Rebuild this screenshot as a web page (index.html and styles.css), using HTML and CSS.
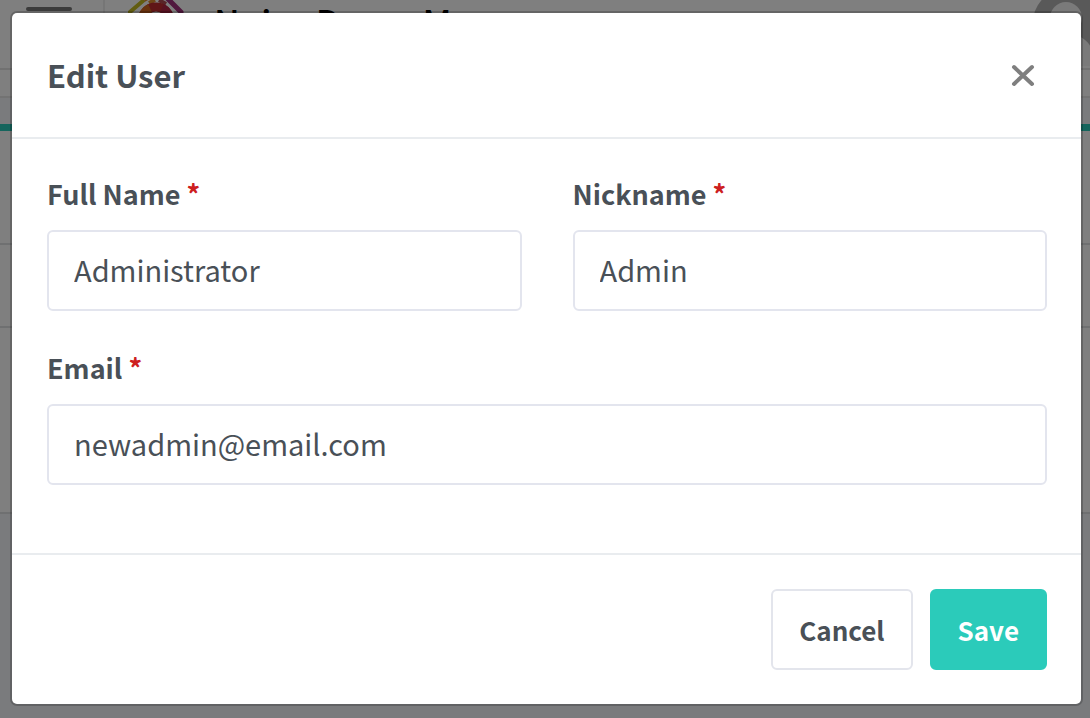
FILE: index.html
```html
<!DOCTYPE html>
<html lang="en">
<head>
<meta charset="utf-8">
<title>Edit User</title>
<link rel="stylesheet" href="styles.css">
</head>
<body>
<div class="page" aria-hidden="true">
  <header class="topbar">
    <div class="menu"><span class="menu-line"></span></div>
    <svg class="logo" viewBox="0 0 60 60">
      <path d="M2 30 L3 12 L17 0" fill="none" stroke="#c4bb22" stroke-width="4"/>
      <path d="M17 0 L24 -4 M22 3 L28 0" fill="none" stroke="#dc8c30" stroke-width="4"/>
      <path d="M32 0 L39 4" fill="none" stroke="#b04a50" stroke-width="4"/>
      <path d="M40 -2 L54 12 L55 30" fill="none" stroke="#a0307c" stroke-width="5"/>
      <circle cx="29" cy="21" r="14" fill="#fff" stroke="#c02c30" stroke-width="9"/>
      <path d="M15 21 A14 14 0 0 1 23 8" fill="none" stroke="#d2641c" stroke-width="9"/>
      <path d="M35 8 A14 14 0 0 1 43 21" fill="none" stroke="#b02444" stroke-width="9"/>
    </svg>
    <span class="brand">Noise Demo M</span>
    <svg class="avatar" viewBox="0 0 80 80">
      <circle cx="40" cy="40" r="40" fill="#b2b2b2"/>
      <circle cx="34" cy="32" r="16" fill="#f4f4f4"/>
      <path d="M6 80 C6 56 18 48 34 48 C52 48 62 58 64 80 Z" fill="#f4f4f4"/>
    </svg>
  </header>
  <div class="strip"></div>
  <div class="subbar"></div>
  <div class="panel">
    <div class="row row-head"></div>
    <div class="row row-item"></div>
    <div class="row row-last"></div>
  </div>
</div>

<div class="overlay">
  <form class="modal" role="dialog" aria-labelledby="modal-title">
    <div class="modal-header">
      <h1 class="modal-title" id="modal-title">Edit User</h1>
      <button class="close" type="button" aria-label="Close">
        <svg class="close-icon" viewBox="0 0 24 24"><path d="M3 4 L21 21 M21 4 L3 21" fill="none" stroke="#7f7f7f" stroke-width="4" stroke-linecap="round"/></svg>
      </button>
    </div>
    <div class="modal-body">
      <div class="field">
        <label class="label" for="full-name">Full Name <span class="required">*</span></label>
        <input class="input" id="full-name" type="text" value="Administrator" required>
      </div>
      <div class="field">
        <label class="label" for="nickname">Nickname <span class="required">*</span></label>
        <input class="input" id="nickname" type="text" value="Admin" required>
      </div>
      <div class="field field-wide">
        <label class="label" for="email">Email <span class="required">*</span></label>
        <input class="input" id="email" type="email" value="newadmin@email.com" required>
      </div>
    </div>
    <div class="modal-footer">
      <button class="button" type="button">Cancel</button>
      <button class="button button-primary" type="submit">Save</button>
    </div>
  </form>
</div>
</body>
</html>
```

FILE: styles.css
```css
* {
  box-sizing: border-box;
}

body {
  margin: 0;
  min-height: 100vh;
  overflow: hidden;
  background: #f5f7fb;
  color: #495057;
  font-family: "Noto Sans CJK SC", "Open Sans", sans-serif;
}

/* Page behind the dialog */
.page {
  position: absolute;
  inset: 0;
  overflow: hidden;
}

.topbar {
  display: flex;
  align-items: flex-start;
  height: 70px;
  border-bottom: 2px solid #e2e2e2;
  background: #fff;
}

.menu {
  width: 105px;
  height: 68px;
  padding: 7px 0 0 26px;
  border-right: 2px solid #ececec;
}

.menu-line {
  display: block;
  width: 46px;
  height: 4px;
  border-radius: 2px;
  background: #777;
}

.logo {
  width: 60px;
  height: 60px;
  margin-left: 22px;
}

.brand {
  margin-left: 27px;
  color: #000;
  font-size: 35px;
  font-weight: 500;
  line-height: 42px;
}

.avatar {
  width: 80px;
  height: 80px;
  margin: -14px -22px 0 auto;
}

.strip {
  height: 28px;
  border-bottom: 2px solid #e6e6e6;
  background: #fff;
}

.subbar {
  height: 33px;
  border-bottom: 7px solid #2bcbba;
}

.panel {
  background: #fff;
}

.row {
  border-bottom: 2px solid #dfe0e2;
}

.row-head {
  height: 114px;
}

.row-item {
  height: 83px;
}

.row-last {
  height: 186px;
}

/* Dialog */
.overlay {
  position: absolute;
  inset: 0;
  padding: 13px 9px 14px 12px;
  background: rgba(0, 0, 0, 0.5);
}

.modal {
  border-radius: 5px;
  background: #fff;
  box-shadow: 0 0 0 2px rgba(0, 0, 0, 0.2);
}

.modal-header {
  display: flex;
  align-items: center;
  justify-content: space-between;
  height: 126px;
  padding: 0 34px 0 35px;
  border-bottom: 2px solid #e9ecef;
}

.modal-title {
  margin: 0;
  font-size: 31px;
  font-weight: 700;
  line-height: 44px;
}

.close {
  display: flex;
  padding: 12px;
  border: 0;
  background: none;
}

.close-icon {
  width: 24px;
  height: 24px;
}

.modal-body {
  display: grid;
  grid-template-columns: 1fr 1fr;
  gap: 35px 51px;
  padding: 33px 34px 68px 35px;
}

.field {
  display: flex;
  flex-direction: column;
  gap: 14px;
  min-width: 0;
}

.field-wide {
  grid-column: 1 / -1;
}

.label {
  font-size: 27px;
  font-weight: 700;
  line-height: 44px;
}

.required {
  color: #cd201f;
}

.input {
  width: 100%;
  height: 81px;
  padding: 0 25px 3px;
  border: 2px solid #e3e5ee;
  border-radius: 6px;
  background: #fff;
  color: #495057;
  font: 400 29px/44px "Noto Sans CJK SC", "Open Sans", sans-serif;
  outline: none;
}

.modal-footer {
  display: flex;
  justify-content: flex-end;
  gap: 17px;
  padding: 34px;
  border-top: 2px solid #e9ecef;
}

.button {
  height: 81px;
  padding: 0 26px;
  border: 2px solid #e3e5ec;
  border-radius: 6px;
  background: #fff;
  color: #495057;
  font: 700 26px/44px "Noto Sans CJK SC", "Open Sans", sans-serif;
}

.button-primary {
  border-color: #2bcbba;
  background: #2bcbba;
  color: #fff;
}
```
